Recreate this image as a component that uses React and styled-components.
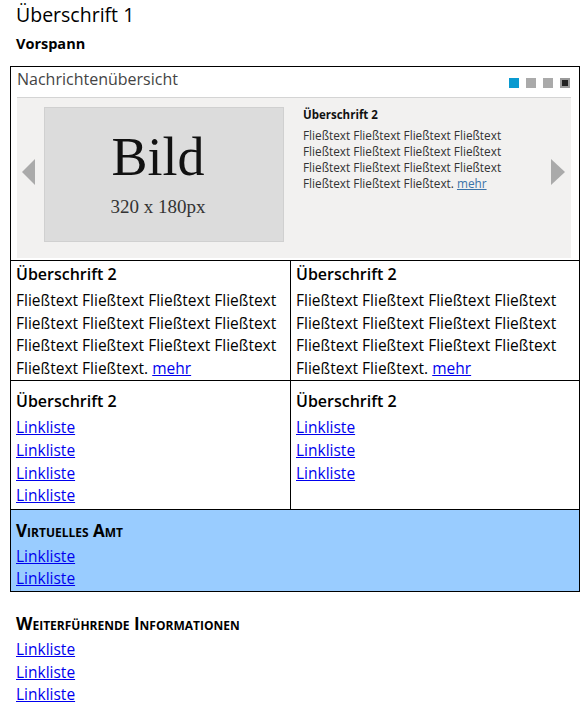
import React from 'react'
import styled, { createGlobalStyle } from 'styled-components'

const GlobalStyle = createGlobalStyle`
  body {
    margin: 0;
    background: #fff;
    font-family: 'Open Sans', 'DejaVu Sans', sans-serif;
    color: #000;
  }
`

const Page = styled.div`
  width: 588px;
  padding: 0 8px 0 10px;
  box-sizing: border-box;
`

const Title = styled.h1`
  margin: 0;
  padding: 2px 0 0 6px;
  font-size: 19.5px;
  font-weight: 400;
  line-height: 26px;
`

const Lead = styled.p`
  margin: 0;
  padding: 6px 0 0 6px;
  font-size: 14.5px;
  font-weight: 700;
  line-height: 20px;
`

const Box = styled.div`
  margin-top: 12px;
  border: 1px solid #000;
  width: 570px;
  box-sizing: border-box;
`

const Slider = styled.div`
  padding: 0 8px 2px 6px;
  border-bottom: 1px solid #000;
`

const SliderHead = styled.div`
  display: flex;
  align-items: flex-start;
  justify-content: space-between;
  height: 30px;
  border-bottom: 1px solid #d4d4d4;
`

const SliderTitle = styled.span`
  font-size: 16px;
  line-height: 20px;
  color: #444;
  padding-top: 2px;
`

const Dots = styled.div`
  display: flex;
  gap: 7px;
  padding: 11px 1px 0 0;
`

const Dot = styled.span`
  width: 10px;
  height: 10px;
  box-sizing: border-box;
  background: ${(p) => (p.active ? '#0a9ad0' : p.last ? '#222' : '#aaa')};
  border: ${(p) => (p.last ? '2px solid #9a9a9a' : 'none')};
`

const Stage = styled.div`
  display: flex;
  align-items: flex-start;
  background: #f2f1f0;
  height: 160px;
  padding: 9px 0 0 5px;
  box-sizing: border-box;
`

const Arrow = styled.span`
  width: 0;
  height: 0;
  margin-top: 52px;
  border-top: 13px solid transparent;
  border-bottom: 13px solid transparent;
  border-right: ${(p) => (p.dir === 'left' ? '13px solid #aaa' : 'none')};
  border-left: ${(p) => (p.dir === 'right' ? '14px solid #aaa' : 'none')};
`

const Picture = styled.div`
  width: 240px;
  height: 135px;
  margin-left: 9px;
  padding-right: 12px;
  background: #dcdcdc;
  border: 1px solid #d0d0d0;
  box-sizing: border-box;
  display: flex;
  flex-direction: column;
  align-items: center;
  font-family: 'Liberation Serif', serif;
  color: #111;
`

const PicBig = styled.span`
  font-size: 54px;
  line-height: 54px;
  margin-top: 22px;
`

const PicSmall = styled.span`
  font-size: 19px;
  color: #333;
  margin-top: 12px;
`

const Teaser = styled.div`
  width: 240px;
  margin: 0 8px 0 19px;
  font-size: 11.8px;
  line-height: 16px;
  color: #333;
`

const TeaserHead = styled.div`
  font-weight: 700;
  font-size: 11.5px;
  color: #111;
  margin-bottom: 4px;
`

const TeaserLink = styled.a`
  color: #3a73a8;
`

const Grid = styled.div`
  display: grid;
  grid-template-columns: 280px 1fr;
`

const Cell = styled.div`
  padding: ${(p) => (p.roomy ? '9px 5px 2px' : '2px 5px 1px')};
  border-right: ${(p) => (p.left ? '1px solid #000' : 'none')};
  border-bottom: 1px solid #000;
`

const Heading = styled.h2`
  margin: 0 0 3px;
  font-size: 16px;
  font-weight: 600;
  line-height: 23px;
`

const Body = styled.p`
  margin: 0;
  font-size: 15.5px;
  line-height: 22.6px;
`

const Link = styled.a`
  display: block;
  color: #0000ee;
  font-size: 15.5px;
  line-height: 22.6px;
`

const InlineLink = styled.a`
  color: #0000ee;
`

const Office = styled.div`
  background: #99ccff;
  padding: 11px 5px 1px;
`

const SmallCaps = styled.h3`
  margin: 0 0 4px;
  font-size: 17px;
  font-weight: 700;
  font-variant: small-caps;
  letter-spacing: 0;
  line-height: 20px;
`

const Further = styled.div`
  padding: 22px 0 0 6px;
`

const text = 'Fließtext Fließtext Fließtext Fließtext Fließtext Fließtext Fließtext Fließtext Fließtext Fließtext Fließtext Fließtext Fließtext Fließtext.'

const App = () => {
  return (
    <Page>
      <GlobalStyle />
      <Title>Überschrift 1</Title>
      <Lead>Vorspann</Lead>
      <Box>
        <Slider>
          <SliderHead>
            <SliderTitle>Nachrichtenübersicht</SliderTitle>
            <Dots>
              <Dot active />
              <Dot />
              <Dot />
              <Dot last />
            </Dots>
          </SliderHead>
          <Stage>
            <Arrow dir='left' />
            <Picture>
              <PicBig>Bild</PicBig>
              <PicSmall>320 x 180px</PicSmall>
            </Picture>
            <Teaser>
              <TeaserHead>Überschrift 2</TeaserHead>
              Fließtext Fließtext Fließtext Fließtext Fließtext Fließtext Fließtext Fließtext Fließtext
              Fließtext Fließtext Fließtext Fließtext Fließtext Fließtext. <TeaserLink href='#'>mehr</TeaserLink>
            </Teaser>
            <Arrow dir='right' />
          </Stage>
        </Slider>
        <Grid>
          <Cell left>
            <Heading>Überschrift 2</Heading>
            <Body>
              {text} <InlineLink href='#'>mehr</InlineLink>
            </Body>
          </Cell>
          <Cell>
            <Heading>Überschrift 2</Heading>
            <Body>
              {text} <InlineLink href='#'>mehr</InlineLink>
            </Body>
          </Cell>
          <Cell left roomy>
            <Heading>Überschrift 2</Heading>
            {[0, 1, 2, 3].map((i) => (
              <Link href='#' key={i}>Linkliste</Link>
            ))}
          </Cell>
          <Cell roomy>
            <Heading>Überschrift 2</Heading>
            {[0, 1, 2].map((i) => (
              <Link href='#' key={i}>Linkliste</Link>
            ))}
          </Cell>
        </Grid>
        <Office>
          <SmallCaps>Virtuelles Amt</SmallCaps>
          <Link href='#'>Linkliste</Link>
          <Link href='#'>Linkliste</Link>
        </Office>
      </Box>
      <Further>
        <SmallCaps>Weiterführende Informationen</SmallCaps>
        <Link href='#'>Linkliste</Link>
        <Link href='#'>Linkliste</Link>
        <Link href='#'>Linkliste</Link>
      </Further>
    </Page>
  )
}

export default App
